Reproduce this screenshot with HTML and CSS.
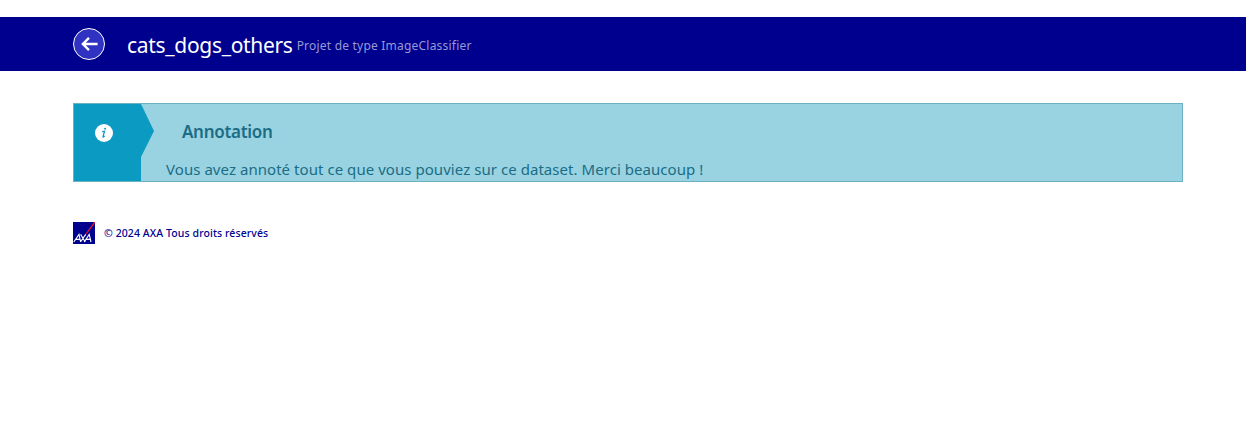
FILE: index.html
```html
<!DOCTYPE html>
<html lang="fr">
<head>
<meta charset="utf-8">
<title>cats_dogs_others</title>
<link rel="stylesheet" href="styles.css">
</head>
<body>
<header class="title-bar">
  <a class="back" aria-label="Retour">
    <svg width="32" height="32" viewBox="0 0 32 32"><circle cx="16" cy="16" r="15.5" fill="#3032c1" stroke="#fff"/><path d="M24.6 16H10.2M16 9.9L9.9 16l6.1 6.1" fill="none" stroke="#fff" stroke-width="2.4"/></svg>
  </a>
  <h1 class="title"><span class="name">cats_dogs_others</span><span class="subtitle">Projet de type ImageClassifier</span></h1>
</header>
<main class="alert">
  <div class="alert-icon">
    <svg class="info" width="18" height="18" viewBox="0 0 18 18"><circle cx="9" cy="9" r="9" fill="#fff"/><path d="M7.2 7.6l2.3-.4-1.5 5.4c-.2.8.3.7 1.6-.7" fill="none" stroke="#0b9ac2" stroke-width="1.3"/><circle cx="10.1" cy="4.8" r="1" fill="#0b9ac2"/></svg>
  </div>
  <svg class="arrow" width="13" height="53" viewBox="0 0 13 53"><path d="M0 0l13 27L0 53z" fill="#0b9ac2"/></svg>
  <div class="alert-body">
    <h2 class="alert-title"><span>Annotation</span></h2>
    <p class="alert-text"><span>Vous avez annoté tout ce que vous pouviez sur ce dataset. Merci beaucoup !</span></p>
  </div>
</main>
<footer class="footer">
  <svg width="22" height="22" viewBox="0 0 22 22"><path d="M0 0h22v22H0z" fill="#00008f"/><path d="M12.4 12L21.2 0H22v1L13.6 12z" fill="#ff1721"/><path d="M.8 20L6 12.4 7.6 20M2.6 17.4H7M7.6 12.4L12.2 20M12.8 12.4L7.4 20M11.2 20l5-7.6L18 20M13 17.4h4.2" fill="none" stroke="#fff" stroke-width="1.1"/></svg>
  <span class="copyright">© 2024 AXA Tous droits réservés</span>
</footer>
</body>
</html>
```
FILE: styles.css
```css
* { box-sizing: border-box; }
body { margin: 0; padding-top: 17px; background: #fff; font-family: "Noto Sans", "Open Sans", sans-serif; }
h1, h2, p { margin: 0; font-weight: 400; }
svg { display: block; flex: none; }
.title-bar { height: 54px; padding-left: 73px; display: flex; align-items: center; background: #00008f; color: #fff; }
.title { display: flex; align-items: center; margin-left: 22px; white-space: nowrap; }
.name { font-size: 21px; line-height: 30px; letter-spacing: -0.31px; padding-top: 2px; }
.subtitle { margin-left: 4px; padding-top: 4px; font-size: 12px; line-height: 16px; letter-spacing: 0.21px; color: #9999d2; }
.alert { display: flex; height: 79px; margin: 32px 63px 0 73px; border: 1px solid #6eb0c3; background: #99d3e2; color: #1b6d85; }
.alert-icon { width: 67px; padding: 20px 0 0 21px; background: #0b9ac2; }
.alert-body { margin-left: 12px; white-space: nowrap; }
.alert-title { padding: 16px 0 0 16px; font-size: 17px; line-height: 24px; font-weight: 600; letter-spacing: -0.3px; }
.alert-text { padding-top: 13px; font-size: 15px; line-height: 24px; letter-spacing: 0.05px; }
.footer { display: flex; align-items: center; margin: 40px 0 0 73px; color: #00008f; }
.copyright { margin-left: 9px; font-size: 10.5px; line-height: 16px; font-weight: 500; letter-spacing: 0.09px; white-space: nowrap; }
```
